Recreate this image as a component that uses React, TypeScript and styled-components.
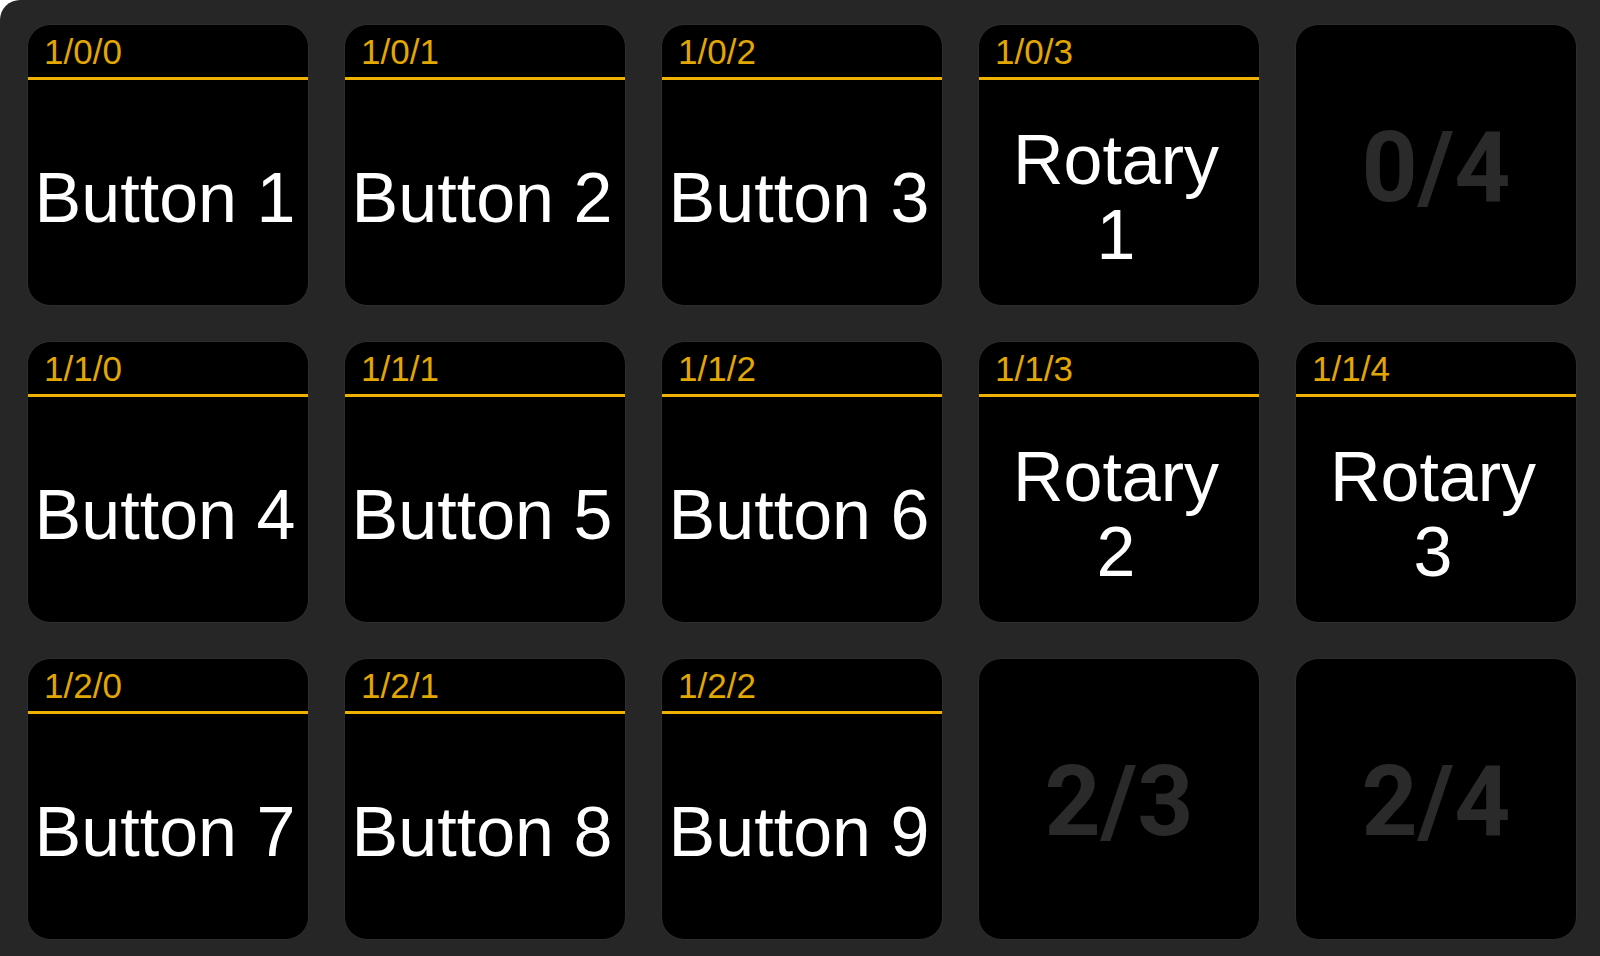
import styled, { createGlobalStyle } from "styled-components";

const GlobalStyle = createGlobalStyle`
  html, body {
    margin: 0;
    padding: 0;
    background: #ffffff;
  }
  body {
    font-family: "Liberation Sans", Arial, sans-serif;
  }
`;

type Control = {
  id: string;
  lines?: string[];
  empty?: boolean;
};

const controls: Control[] = [
  { id: "1/0/0", lines: ["Button 1"] },
  { id: "1/0/1", lines: ["Button 2"] },
  { id: "1/0/2", lines: ["Button 3"] },
  { id: "1/0/3", lines: ["Rotary", "1"] },
  { id: "0/4", empty: true },
  { id: "1/1/0", lines: ["Button 4"] },
  { id: "1/1/1", lines: ["Button 5"] },
  { id: "1/1/2", lines: ["Button 6"] },
  { id: "1/1/3", lines: ["Rotary", "2"] },
  { id: "1/1/4", lines: ["Rotary", "3"] },
  { id: "1/2/0", lines: ["Button 7"] },
  { id: "1/2/1", lines: ["Button 8"] },
  { id: "1/2/2", lines: ["Button 9"] },
  { id: "2/3", empty: true },
  { id: "2/4", empty: true },
];

export default function App() {
  return (
    <>
      <GlobalStyle />
      <Deck>
        <Grid>
          {controls.map((c) =>
            c.empty ? (
              <Tile key={c.id} $empty>
                <Slot>{c.id}</Slot>
              </Tile>
            ) : (
              <Tile key={c.id}>
                <Header>{c.id}</Header>
                <Body>
                  <Name>
                    {c.lines!.map((l, i) => (
                      <span key={i}>{l}</span>
                    ))}
                  </Name>
                </Body>
              </Tile>
            )
          )}
        </Grid>
      </Deck>
    </>
  );
}

const Deck = styled.div`
  min-height: 100vh;
  background: #262626;
  border-top-left-radius: 20px;
  box-sizing: border-box;
  padding: 25px 0 0 28px;
  overflow: hidden;
`;

const Grid = styled.div`
  display: grid;
  grid-template-columns: repeat(5, 280px);
  grid-auto-rows: 280px;
  column-gap: 37px;
  row-gap: 37.2px;
`;

const Tile = styled.div<{ $empty?: boolean }>`
  background: #000;
  border-radius: 22px;
  box-shadow: 0 0 0 1px #2d2d2d;
  overflow: hidden;
  display: flex;
  flex-direction: column;
  ${({ $empty }) =>
    $empty &&
    `
    align-items: center;
    justify-content: center;
  `}
`;

const Header = styled.div`
  height: 55px;
  box-sizing: border-box;
  padding: 7px 0 0 16px;
  border-bottom: 3px solid #f0b000;
  color: #e2a700;
  font-size: 35px;
  line-height: 39px;
  flex: none;
`;

const Body = styled.div`
  flex: 1;
  display: flex;
  align-items: center;
  justify-content: center;
  padding: 11px 6px 0 0;
  box-sizing: border-box;
`;

const Name = styled.div`
  display: flex;
  flex-direction: column;
  align-items: center;
  color: #ffffff;
  font-size: 70px;
  line-height: 1.07;
  white-space: nowrap;
  text-align: center;
`;

const Slot = styled.div`
  font-family: Roboto, "Liberation Sans", sans-serif;
  font-weight: 700;
  font-size: 98px;
  line-height: 1;
  color: #2a2a2a;
  padding-top: 6px;
`;
